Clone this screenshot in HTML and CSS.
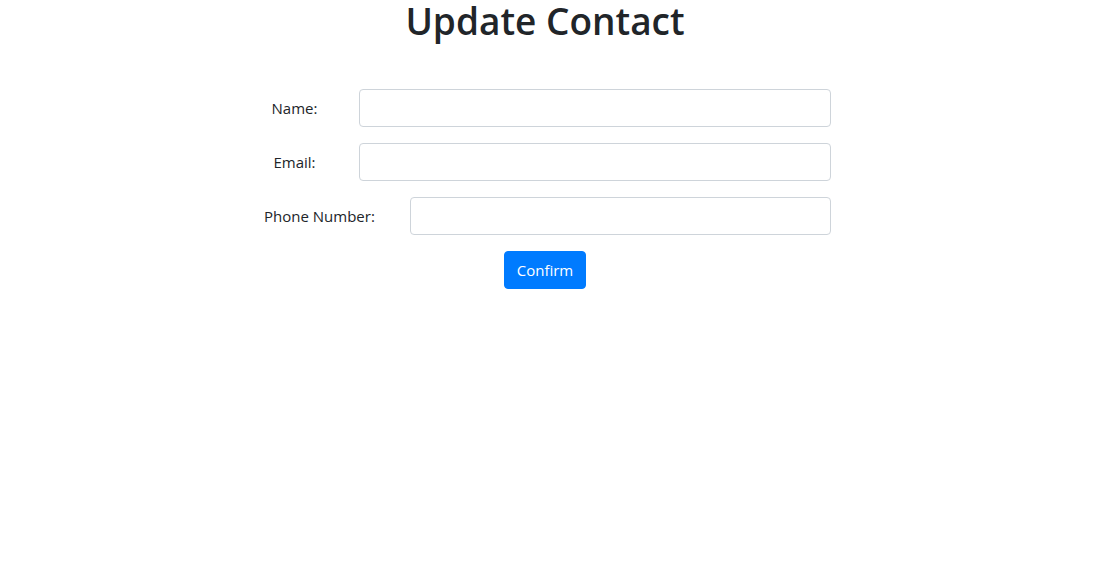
FILE: index.html
```html
<!DOCTYPE html>
<html lang="en">
<head>
<meta charset="utf-8">
<title>Update Contact</title>
<link rel="stylesheet" href="styles.css">
</head>
<body>
<div class="page">
  <h1 class="title">Update Contact</h1>
  <form class="form">
    <div class="row">
      <label class="label" for="name">Name:</label>
      <input class="input" id="name" type="text">
    </div>
    <div class="row">
      <label class="label" for="email">Email:</label>
      <input class="input" id="email" type="email">
    </div>
    <div class="row">
      <label class="label label-wide" for="phone">Phone Number:</label>
      <input class="input" id="phone" type="text">
    </div>
    <div class="actions">
      <button class="btn" type="button">Confirm</button>
    </div>
  </form>
</div>
</body>
</html>
```

FILE: styles.css
```css
html, body {
  margin: 0;
  padding: 0;
  background: #fff;
}
body {
  font-family: "Open Sans", "Noto Sans", "Liberation Sans", sans-serif;
  font-size: 16px;
  color: #212529;
}
.page {
  width: 1090px;
}
.title {
  margin: 0;
  font-size: 37px;
  font-weight: 600;
  line-height: 42px;
  text-align: center;
  color: #212529;
}
.form {
  width: 567px;
  margin: 47px auto 0 264px;
  display: flex;
  flex-direction: column;
  gap: 16px;
}
.row {
  display: flex;
  align-items: center;
  height: 38px;
}
.label {
  min-width: 61px;
  margin-right: 34px;
  text-align: center;
  font-size: 15px;
  white-space: nowrap;
}
.label-wide {
  margin-right: 35px;
}
.input {
  flex: 1;
  height: 38px;
  box-sizing: border-box;
  border: 1px solid #ced4da;
  border-radius: 4px;
  padding: 6px 12px;
  font: inherit;
  background: #fff;
}
.actions {
  display: flex;
  justify-content: center;
  padding-right: 5px;
}
.btn {
  height: 38px;
  width: 82px;
  box-sizing: border-box;
  border: 1px solid #007bff;
  border-radius: 4px;
  background: #007bff;
  color: #fff;
  font-family: inherit;
  font-size: 15px;
  padding: 0;
}
```
